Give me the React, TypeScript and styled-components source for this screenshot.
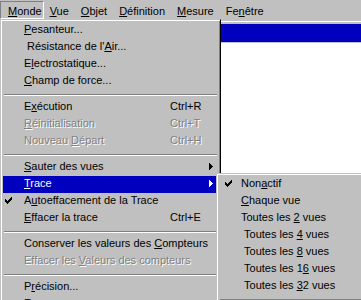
import React from 'react';
import styled, { createGlobalStyle } from 'styled-components';

const GlobalStyle = createGlobalStyle`
  html, body { margin: 0; padding: 0; background: #c0c0c0; }
  * { box-sizing: border-box; }
`;

const Screen = styled.div`
  position: relative;
  width: 361px;
  height: 300px;
  overflow: hidden;
  background: #c0c0c0;
  display: flex;
  flex-direction: column;
  font-family: "Liberation Sans", Arial, sans-serif;
  font-size: 11px;
  color: #000;
`;

const MenuBar = styled.div`
  display: flex;
  height: 19px;
  flex-shrink: 0;
  padding-top: 1px;
`;

const BarItem = styled.div<{ $pressed?: boolean; $first?: boolean }>`
  height: 18px;
  padding: 2px ${(p) => (p.$first ? '1px 0 7px' : '5px 0 5px')};
  line-height: 14px;
  white-space: nowrap;
  border: 1px solid transparent;
  border-color: ${(p) => (p.$pressed ? '#808080 #fff #fff #808080' : 'transparent')};
`;

const Acc = styled.span`
  text-decoration: underline;
  text-decoration-thickness: 1px;
  text-underline-offset: 1px;
`;

const Workspace = styled.div`
  flex: 1;
  display: flex;
  flex-direction: column;
  padding-top: 2px;
`;

const DocWindow = styled.div`
  flex: 1;
  display: flex;
  flex-direction: column;
  border-top: 1px solid #fff;
  padding-top: 2px;
  background: #c0c0c0;
`;

const TitleBar = styled.div`
  height: 18px;
  background: #0000be;
`;

const Client = styled.div`
  flex: 1;
  margin-top: 1px;
  background: #fff;
`;

const Menu = styled.div<{ $top: number; $left: number; $width: number }>`
  position: absolute;
  top: ${(p) => p.$top}px;
  left: ${(p) => p.$left}px;
  width: ${(p) => p.$width}px;
  height: 320px;
  background: #c0c0c0;
  border: 1px solid;
  border-color: #c0c0c0 #000 #000 #c0c0c0;
  box-shadow: inset 1px 1px #fff, inset -1px -1px #808080;
  padding: 2px;
  display: flex;
  flex-direction: column;
  overflow: hidden;
`;

const Item = styled.div<{ $cols: string; $active?: boolean; $disabled?: boolean }>`
  display: grid;
  grid-template-columns: ${(p) => p.$cols};
  height: 17px;
  line-height: 15px;
  white-space: nowrap;
  background: ${(p) => (p.$active ? '#0000be' : 'transparent')};
  color: ${(p) => (p.$active ? '#fff' : p.$disabled ? '#808080' : '#000')};
  text-shadow: ${(p) => (p.$disabled ? '1px 1px 0 #fff' : 'none')};
`;

const CheckCell = styled.div<{ $offset: number }>`
  display: flex;
  align-items: flex-start;
  padding: 4px 0 0 ${(p) => p.$offset}px;
`;

const Label = styled.div`
  overflow: visible;
`;

const Shortcut = styled.div``;

const ArrowCell = styled.div`
  display: flex;
  align-items: flex-start;
  padding-top: 4px;
`;

const Separator = styled.div`
  height: 9px;
  padding: 4px 1px 0;
  &::before {
    content: '';
    display: block;
    height: 1px;
    background: #808080;
    box-shadow: 0 1px 0 #fff;
  }
`;

const CheckIcon: React.FC<{ color: string }> = ({ color }) => (
  <svg width="7" height="7" viewBox="0 0 7 7" shapeRendering="crispEdges">
    <path
      fill={color}
      d="M6 0h1v1h-1z M5 1h2v1h-2z M0 2h1v1h-1z M4 2h3v1h-3z M0 3h2v1h-2z M3 3h3v1h-3z M0 4h5v1h-5z M1 5h3v1h-3z M2 6h1v1h-1z"
    />
  </svg>
);

const ArrowIcon: React.FC<{ color: string }> = ({ color }) => (
  <svg width="4" height="7" viewBox="0 0 4 7" shapeRendering="crispEdges">
    <path fill={color} d="M0 0h1v7h-1z M1 1h1v5h-1z M2 2h1v3h-1z M3 3h1v1h-1z" />
  </svg>
);

const MAIN_COLS = '21px 146px 39px 9px';
const SUB_COLS = '22px 1fr';

type Entry =
  | { sep: true }
  | {
      sep?: false;
      label: React.ReactNode;
      shortcut?: string;
      arrow?: boolean;
      checked?: boolean;
      active?: boolean;
      disabled?: boolean;
    };

const mainItems: Entry[] = [
  { label: <><Acc>P</Acc>esanteur...</> },
  { label: <>&nbsp;Résistance de l'<Acc>A</Acc>ir...</> },
  { label: <>E<Acc>l</Acc>ectrostatique...</> },
  { label: <><Acc>C</Acc>hamp de force...</> },
  { sep: true },
  { label: <>E<Acc>x</Acc>écution</>, shortcut: 'Ctrl+R' },
  { label: <><Acc>R</Acc>éinitialisation</>, shortcut: 'Ctrl+T', disabled: true },
  { label: <>Nouveau <Acc>D</Acc>épart</>, shortcut: 'Ctrl+H', disabled: true },
  { sep: true },
  { label: <><Acc>S</Acc>auter des vues</>, arrow: true },
  { label: <><Acc>T</Acc>race</>, arrow: true, active: true },
  { label: <>A<Acc>u</Acc>toeffacement de la Trace</>, checked: true },
  { label: <><Acc>E</Acc>ffacer la trace</>, shortcut: 'Ctrl+E' },
  { sep: true },
  { label: <>Conserver les valeurs des <Acc>C</Acc>ompteurs</> },
  { label: <>Effacer les <Acc>V</Acc>aleurs des compteurs</>, disabled: true },
  { sep: true },
  { label: <>P<Acc>r</Acc>écision...</> },
  { label: <>Erreurs...</> },
];

const subItems: Entry[] = [
  { label: <>Non<Acc>a</Acc>ctif</>, checked: true },
  { label: <><Acc>C</Acc>haque vue</> },
  { label: <>Toutes les <Acc>2</Acc> vues</> },
  { label: <>&nbsp;Toutes les <Acc>4</Acc> vues</> },
  { label: <>&nbsp;Toutes les <Acc>8</Acc> vues</> },
  { label: <>&nbsp;Toutes les 1<Acc>6</Acc> vues</> },
  { label: <>&nbsp;Toutes les <Acc>3</Acc>2 vues</> },
  { sep: true },
];

const renderItems = (items: Entry[], cols: string, checkOffset: number, withExtras: boolean) =>
  items.map((it, i) => {
    if (it.sep) return <Separator key={i} />;
    const color = it.active ? '#fff' : '#000';
    return (
      <Item key={i} $cols={cols} $active={it.active} $disabled={it.disabled}>
        <CheckCell $offset={checkOffset}>{it.checked && <CheckIcon color={color} />}</CheckCell>
        <Label>{it.label}</Label>
        {withExtras && <Shortcut>{it.shortcut}</Shortcut>}
        {withExtras && <ArrowCell>{it.arrow && <ArrowIcon color={color} />}</ArrowCell>}
      </Item>
    );
  });

export default function App() {
  return (
    <>
      <GlobalStyle />
      <Screen>
        <MenuBar>
          <BarItem $pressed $first>
            <Acc>M</Acc>onde
          </BarItem>
          <BarItem>
            <Acc>V</Acc>ue
          </BarItem>
          <BarItem>
            <Acc>O</Acc>bjet
          </BarItem>
          <BarItem>
            <Acc>D</Acc>éfinition
          </BarItem>
          <BarItem>
            <Acc>M</Acc>esure
          </BarItem>
          <BarItem>
            Fe<Acc>n</Acc>être
          </BarItem>
        </MenuBar>
        <Workspace>
          <DocWindow>
            <TitleBar />
            <Client />
          </DocWindow>
        </Workspace>
        <Menu $top={19} $left={0} $width={221}>
          {renderItems(mainItems, MAIN_COLS, 2, true)}
        </Menu>
        <Menu $top={173} $left={216} $width={160}>
          {renderItems(subItems, SUB_COLS, 6, false)}
        </Menu>
      </Screen>
    </>
  );
}
